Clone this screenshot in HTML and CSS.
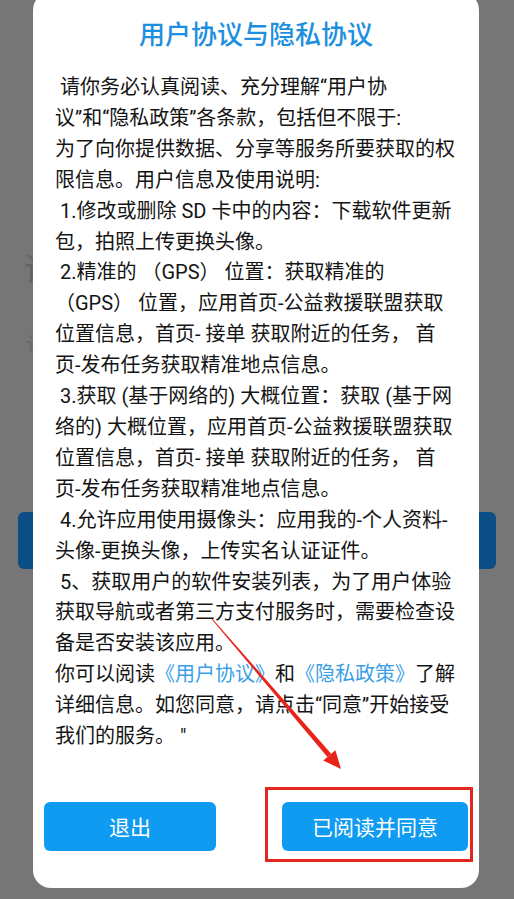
FILE: index.html
```html
<!DOCTYPE html>
<html lang="zh-CN">
<head>
  <meta charset="UTF-8">
  <meta name="viewport" content="width=device-width, initial-scale=1.0">
  <title>用户协议与隐私协议</title>
  <link rel="stylesheet" href="styles.css">
</head>
<body>
  <!-- Login page under the dialog -->
  <div class="login">
    <div class="login-title">请输入手机号</div>
    <div class="login-field">请输入验证码</div>
    <div class="login-button"></div>
  </div>

  <!-- Agreement Modal -->
  <div class="mask">
    <div class="dialog">
      <h2 class="dialog-title">用户协议与隐私协议</h2>
      <p class="dialog-text">&nbsp;请你务必认真阅读、充分理解“用户协<br>议”和“隐私政策”各条款，包括但不限于:<br>为了向你提供数据、分享等服务所要获取的权<br>限信息。用户信息及使用说明:<br>&nbsp;1.修改或删除 SD 卡中的内容：下载软件更新<br>包，拍照上传更换头像。<br>&nbsp;2.精准的 （GPS） 位置：获取精准的<br>（GPS） 位置，应用首页-公益救援联盟获取<br>位置信息，首页- 接单 获取附近的任务， 首<br>页-发布任务获取精准地点信息。<br>&nbsp;3.获取 (基于网络的) 大概位置：获取 (基于网<br>络的) 大概位置，应用首页-公益救援联盟获取<br>位置信息，首页- 接单 获取附近的任务， 首<br>页-发布任务获取精准地点信息。<br>&nbsp;4.允许应用使用摄像头：应用我的-个人资料-<br>头像-更换头像，上传实名认证证件。<br>&nbsp;5、获取用户的软件安装列表，为了用户体验<br>获取导航或者第三方支付服务时，需要检查设<br>备是否安装该应用。<br>你可以阅读<a href="#">《用户协议》</a>和<a href="#">《隐私政策》</a>了解<br>详细信息。如您同意，请点击“同意”开始接受<br>我们的服务。 "</p>
      <div class="dialog-actions">
        <button class="btn btn-exit">退出</button>
        <div class="highlight-box">
          <button class="btn btn-agree">已阅读并同意</button>
        </div>
      </div>
    </div>

    <!-- Annotation arrow -->
    <svg class="arrow" width="514" height="899" viewBox="0 0 514 899">
      <polygon points="211.6,619.3 212.4,618.7 331.2,753.8 327.4,757" fill="#e8231c"/>
      <polygon points="341,769 323.2,760.6 335.4,750.2" fill="#e8231c"/>
    </svg>
  </div>
</body>
</html>
```

FILE: styles.css
```css
/* General Styles */
body {
  font-family: Roboto, "Noto Sans CJK SC", sans-serif;
  background: #767676;
  margin: 0;
  padding: 0;
  height: 899px;
  overflow: hidden;
}

/* Login page (dimmed) */
.login {
  padding: 250px 18px 0;
}

.login-title {
  padding-left: 6px;
  font-size: 32px;
  line-height: 40px;
  color: #636363;
}

.login-field {
  margin-top: 40px;
  padding-left: 8px;
  font-size: 20px;
  line-height: 30px;
  color: #686868;
}

.login-button {
  height: 57px;
  margin-top: 152px;
  background: #0b4f86;
  border-radius: 6px;
}

/* Modal */
.mask {
  position: fixed;
  top: 0;
  left: 0;
  width: 100%;
  height: 100%;
}

.dialog {
  width: 446px;
  margin: -8px 0 0 33px;
  padding: 25px 0 26px;
  background: #fff;
  border-radius: 18px;
}

.dialog-title {
  margin: 0;
  font-size: 26px;
  font-weight: 500;
  line-height: 36px;
  text-align: center;
  color: #1e8fde;
}

.dialog-text {
  margin: 19px 0 0;
  padding: 0 22px;
  font-size: 20px;
  line-height: 30.9px;
  color: #141414;
  white-space: nowrap;
}

.dialog-text a {
  color: #3c9fe6;
  text-decoration: none;
}

/* Buttons */
.dialog-actions {
  display: flex;
  align-items: flex-start;
  margin-top: 35px;
  padding: 0 6px 0 11px;
}

.btn {
  height: 49px;
  background: #0f9bf2;
  border: none;
  border-radius: 6px;
  color: #fff;
  font-family: inherit;
  font-size: 21px;
  cursor: pointer;
}

.btn-exit {
  width: 172px;
  margin-top: 15px;
}

.btn-agree {
  display: block;
  width: 186px;
}

.highlight-box {
  margin-left: auto;
  padding: 12px 2px 8px 14px;
  border: 3px solid #e3261f;
}

.arrow {
  position: absolute;
  top: 0;
  left: 0;
  pointer-events: none;
}
```
